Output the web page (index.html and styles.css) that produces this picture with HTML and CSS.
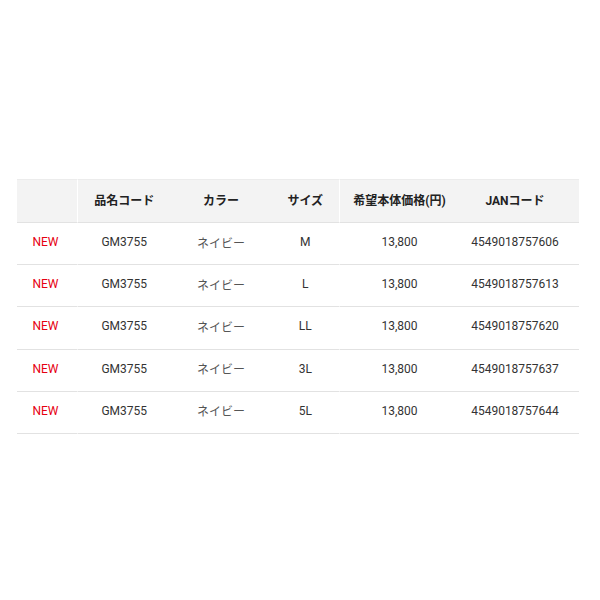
FILE: index.html
```html
<!DOCTYPE html>
<html lang="ja">
<head>
<meta charset="utf-8">
<link rel="stylesheet" href="styles.css">
</head>
<body>
<div class="page">
  <table class="spec">
    <thead>
      <tr>
        <th class="c1"></th>
        <th class="c2 sep">品名コード</th>
        <th class="c3">カラー</th>
        <th class="c4">サイズ</th>
        <th class="c5 sep">希望本体価格(円)</th>
        <th class="c6">JANコード</th>
      </tr>
    </thead>
    <tbody>
      <tr><td class="new">NEW</td><td class="sep">GM3755</td><td class="jp">ネイビー</td><td>M</td><td class="sep">13,800</td><td class="c6">4549018757606</td></tr>
      <tr><td class="new">NEW</td><td class="sep">GM3755</td><td class="jp">ネイビー</td><td>L</td><td class="sep">13,800</td><td class="c6">4549018757613</td></tr>
      <tr><td class="new">NEW</td><td class="sep">GM3755</td><td class="jp">ネイビー</td><td>LL</td><td class="sep">13,800</td><td class="c6">4549018757620</td></tr>
      <tr><td class="new">NEW</td><td class="sep">GM3755</td><td class="jp">ネイビー</td><td>3L</td><td class="sep">13,800</td><td class="c6">4549018757637</td></tr>
      <tr><td class="new">NEW</td><td class="sep">GM3755</td><td class="jp">ネイビー</td><td>5L</td><td class="sep">13,800</td><td class="c6">4549018757644</td></tr>
    </tbody>
  </table>
</div>
</body>
</html>
```
FILE: styles.css
```css
html, body {
  margin: 0;
  padding: 0;
  background: #fff;
}
body {
  font-family: Roboto, "Noto Sans CJK JP", sans-serif;
  font-size: 12px;
  color: #333;
}
.page {
  padding: 179px 21px 0 17px;
}
.spec {
  border-collapse: separate;
  border-spacing: 0;
  table-layout: fixed;
  width: 562px;
}
.spec th,
.spec td {
  text-align: center;
  padding: 0 0 3px 0;
  border-bottom: 1px solid #e2e2e2;
}
.spec th {
  height: 39px;
  background: #f3f3f3;
  border-top: 1px solid #ececec;
  color: #222;
  font-weight: bold;
}
.spec td {
  height: 38.2px;
}
.spec .sep {
  border-left: 1px solid #fff;
}
.c1 { width: 60px; }
.c2 { width: 92.5px; }
.c3 { width: 101px; }
.c4 { width: 67.5px; }
.c5 { width: 119px; }
.c6 { width: 112px; padding-right: 8px !important; }
.spec td.new {
  color: #e60012;
  padding-right: 3px;
}
.spec td.jp {
  color: #555;
}
```
